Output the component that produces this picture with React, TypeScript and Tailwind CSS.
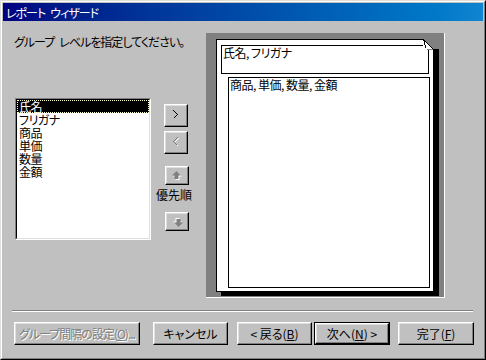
import type { ReactNode } from 'react'

const raised =
  'border border-t-white border-l-white border-r-black border-b-black shadow-[inset_-1px_-1px_#808080,inset_1px_1px_#dfdfdf] bg-[#c0c0c0]'
const disabledText = 'text-[#808080] [text-shadow:1px_1px_0_#ffffff]'

function Btn({ className = '', children }: { className?: string; children: ReactNode }) {
  return (
    <div className={`${raised} flex items-center justify-center whitespace-nowrap ${className}`}>
      {children}
    </div>
  )
}

function Chevron({ dir, disabled }: { dir: 'right' | 'left'; disabled?: boolean }) {
  const pts = dir === 'right' ? '0.5,0.5 4.5,4.5 0.5,8.5' : '4.5,0.5 0.5,4.5 4.5,8.5'
  return (
    <svg width="7" height="11" viewBox="0 0 7 11" shapeRendering="crispEdges">
      {disabled && <polyline points={pts} transform="translate(1,1)" fill="none" stroke="#ffffff" strokeWidth="1" />}
      <polyline points={pts} fill="none" stroke={disabled ? '#808080' : '#000000'} strokeWidth="1" />
    </svg>
  )
}

function Arrow({ up }: { up?: boolean }) {
  // 灰色の矢印（無効状態）
  const d = 'M4.5 0 L9 4.5 L6.5 4.5 L6.5 8 L2.5 8 L2.5 4.5 L0 4.5 Z'
  return (
    <svg width="11" height="10" viewBox="0 0 11 10" className={up ? '' : 'rotate-180'}>
      <path d={d} transform="translate(1,1)" fill="#ffffff" />
      <path d={d} fill="#808080" />
    </svg>
  )
}

const fields = ['氏名', 'フリガナ', '商品', '単価', '数量', '金額']

function ListBox() {
  return (
    <div className="w-[136px] h-[142px] border border-t-[#808080] border-l-[#808080] border-r-white border-b-white">
      <div className="h-full border border-t-black border-l-black border-r-[#dfdfdf] border-b-[#dfdfdf] bg-white">
        {fields.map((f, i) => (
          <div
            key={f}
            className={`h-[13px] pl-[2px] leading-[13px] tracking-[-0.5px] ${
              i === 0 ? 'bg-black text-white outline outline-1 outline-dotted outline-[#ffffcc] -outline-offset-1' : ''
            }`}
          >
            {f}
          </div>
        ))}
      </div>
    </div>
  )
}

function Preview() {
  return (
    <div className="w-[239px] h-[265px] bg-[#808080] border-r border-b border-r-white border-b-white pl-[10px] pt-[6px]">
      <div className="relative w-[218px] h-[253px] bg-white border border-black shadow-[5px_4px_0_#000000] pl-[4px] pt-[5px]">
        <div className="w-[208px] h-[29px] border border-black px-px whitespace-nowrap tracking-[-0.5px]">氏名, フリガナ</div>
        <div className="ml-[7px] mt-[3px] w-[202px] h-[211px] border border-black px-px whitespace-nowrap tracking-[-0.5px]">
          商品, 単価, 数量, 金額
        </div>
        {/* 右上の折り返し */}
        <svg className="absolute top-[-1px] right-[-6px]" width="16" height="11" viewBox="0 0 16 11" shapeRendering="crispEdges">
          <rect x="0" y="0" width="16" height="11" fill="#808080" />
          <polygon points="0,0 11,11 0,11" fill="#ffffff" />
          <polygon points="0.5,0.5 3,9 10.5,10.5" fill="#ffffff" />
          <polygon points="3,9.5 10.5,10.5 4,11" fill="#808080" />
          <polyline points="0.5,0 0.5,0.5 3,9 " fill="none" stroke="#000000" />
          <line x1="0.5" y1="0.5" x2="10.5" y2="10.5" stroke="#000000" />
          <line x1="10.5" y1="10" x2="10.5" y2="11" stroke="#000000" />
          <rect x="11" y="10" width="5" height="1" fill="#000000" />
        </svg>
      </div>
    </div>
  )
}

export default function App() {
  return (
    <div className="w-[486px] h-[360px] bg-[#c0c0c0] font-['Noto_Sans_CJK_JP',sans-serif] text-[12px] leading-[13px] text-black [font-feature-settings:'palt']">
      <div className="h-full border border-t-[#dfdfdf] border-l-[#dfdfdf] border-r-black border-b-black">
        <div className="h-full border border-t-white border-l-white border-r-[#808080] border-b-[#808080] p-px flex flex-col">
          <div className="h-[18px] shrink-0 flex items-center pl-[3px] bg-linear-to-r from-[#000080] to-[#1084d0] text-white whitespace-nowrap tracking-[-1px]">
            レポート{'\u2002'}ウィザード
          </div>

          <div className="flex-1 flex flex-col">
            <div className="flex pt-[12px] h-[277px]">
              <div className="w-[203px] shrink-0 pl-[11px] pt-[2px]">
                <div className="whitespace-nowrap tracking-[-1px]">グループ{'\u2002'}レベルを指定してください。</div>
                <div className="flex mt-[50px] ml-px">
                  <ListBox />
                  <div className="ml-[13px] mt-[6px] flex flex-col w-[26px]">
                    <Btn className="w-[24px] h-[23px]">
                      <Chevron dir="right" />
                    </Btn>
                    <Btn className="w-[24px] h-[23px] mt-[4px]">
                      <Chevron dir="left" disabled />
                    </Btn>
                    <Btn className="w-[24px] h-[19px] mt-[12px] ml-px">
                      <Arrow up />
                    </Btn>
                    <div className="mt-[3px] -ml-[8px] whitespace-nowrap">優先順</div>
                    <Btn className="w-[24px] h-[19px] mt-[11px] ml-px">
                      <Arrow />
                    </Btn>
                  </div>
                </div>
              </div>
              <Preview />
            </div>

            <div className="mt-[12px] ml-[9px] w-[461px] h-[2px] border-t border-b border-t-[#808080] border-b-white" />

            <div className="mt-[10px] pl-[11px] flex items-start">
              <Btn className={`w-[126px] h-[23px] tracking-[-1px] ${disabledText}`}>
                グループ間隔の設定(<span className="underline">O</span>)...
              </Btn>
              <Btn className="w-[75px] h-[23px] ml-[13px]">キャンセル</Btn>
              <Btn className="w-[75px] h-[23px] ml-[9px]">
                {'< '}戻る(<span className="underline">B</span>)
              </Btn>
              <div className="ml-[2px] w-[76px] h-[23px] border border-black">
                <Btn className="w-full h-full">
                  次へ(<span className="underline">N</span>){' >'}
                </Btn>
              </div>
              <Btn className="w-[76px] h-[23px] ml-[8px]">
                完了(<span className="underline">F</span>)
              </Btn>
            </div>
          </div>
        </div>
      </div>
    </div>
  )
}
